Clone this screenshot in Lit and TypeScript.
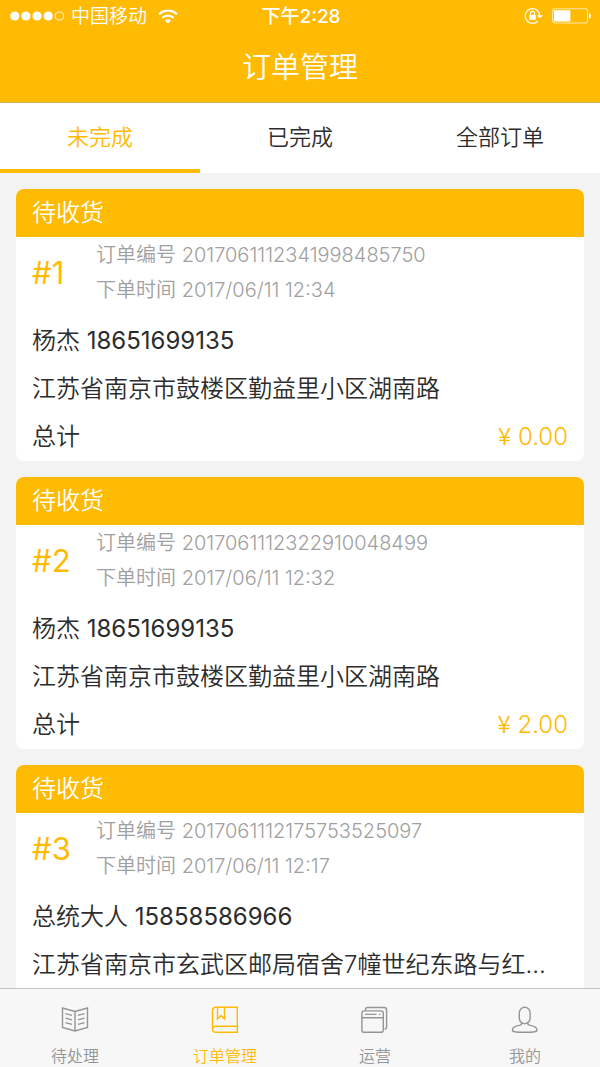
import { LitElement, html, css, svg } from "lit";
import { customElement, property, state } from "lit/decorators.js";
import { classMap } from "lit/directives/class-map.js";

interface Order {
  index: number;
  status: string;
  code: string;
  time: string;
  name: string;
  phone: string;
  address: string;
  total: string;
}

const ORDERS: Order[] = [
  {
    index: 1,
    status: "待收货",
    code: "2017061112341998485750",
    time: "2017/06/11 12:34",
    name: "杨杰",
    phone: "18651699135",
    address: "江苏省南京市鼓楼区勤益里小区湖南路",
    total: "0.00",
  },
  {
    index: 2,
    status: "待收货",
    code: "2017061112322910048499",
    time: "2017/06/11 12:32",
    name: "杨杰",
    phone: "18651699135",
    address: "江苏省南京市鼓楼区勤益里小区湖南路",
    total: "2.00",
  },
  {
    index: 3,
    status: "待收货",
    code: "2017061112175753525097",
    time: "2017/06/11 12:17",
    name: "总统大人",
    phone: "15858586966",
    address: "江苏省南京市玄武区邮局宿舍7幢世纪东路与红山路交叉口",
    total: "0.00",
  },
];

const TABS = ["未完成", "已完成", "全部订单"];

const ICONS = {
  book: svg`<path d="M1.5 2 L14 5.5 L26.5 2 V21.5 L14 25 L1.5 21.5 Z M14 5.5 V25" /><path d="M4.5 7.6 L11 9.4 M4.5 12.1 L11 13.9 M4.5 16.6 L11 18.4 M23.5 7.6 L17 9.4 M23.5 12.1 L17 13.9 M23.5 16.6 L17 18.4" />`,
  orders: svg`<path d="M26.3 20.3 V1.3 H5 C2.8 1.3 1.5 2.7 1.5 4.8 V23" /><path d="M26.3 20.3 H5 C0.4 20.3 0.4 26.3 5 26.3 H26.3 Z" /><path d="M6.5 1.3 V13 L10 9.6 L13.5 13 V1.3" />`,
  windows: svg`<rect x="0.9" y="4.9" width="21.4" height="21.4" rx="2.4" /><path d="M0.9 11.7 H22.3 M4 8.4 H15.5 M18 8.4 H19.6" /><path d="M4.4 4.6 V3.6 Q4.4 1.5 6.6 1.5 H23.2 Q25.6 1.5 25.6 3.9 V21 Q25.6 23 23.6 23.2" />`,
  person: svg`<rect x="8.3" y="1.3" width="10.8" height="16.4" rx="5.4" /><path d="M10.6 17 C10.8 18.4 10.4 18.8 9 19.1 C4.6 19.9 1.4 21.8 1.4 23.9 C1.4 25.8 4.6 26.3 13.7 26.3 C22.8 26.3 26 25.8 26 23.9 C26 21.8 22.8 19.9 18.4 19.1 C17 18.8 16.6 18.4 16.8 17" />`,
};

const NAV = [
  { label: "待处理", icon: ICONS.book },
  { label: "订单管理", icon: ICONS.orders },
  { label: "运营", icon: ICONS.windows },
  { label: "我的", icon: ICONS.person },
];

@customElement("status-bar")
export class StatusBar extends LitElement {
  static styles = css`
    :host {
      display: grid;
      grid-template-columns: 1fr auto 1fr;
      align-items: center;
      height: 32px;
      padding: 0 8px 0 10px;
      font-size: 19px;
      line-height: 32px;
    }
    .side {
      display: flex;
      align-items: center;
    }
    .label {
      padding-top: 2px;
      line-height: 30px;
    }
    .signal {
      width: 54px;
      height: 10px;
      margin-right: 7px;
    }
    .wifi {
      width: 20px;
      height: 15px;
      margin-left: 11px;
    }
    .time {
      font-weight: 500;
    }
    .end {
      justify-content: flex-end;
      gap: 8px;
    }
    .lock {
      width: 20px;
      height: 18px;
    }
    .battery {
      width: 40px;
      height: 16px;
    }
  `;

  render() {
    return html`
      <div class="side">
        <svg class="signal" viewBox="0 0 54 10" fill="#fff" aria-hidden="true">
          <circle cx="4.7" cy="5" r="4.6" /><circle cx="15.9" cy="5" r="4.6" />
          <circle cx="27.1" cy="5" r="4.6" /><circle cx="38.3" cy="5" r="4.6" />
          <circle cx="49.4" cy="5" r="4.1" fill="none" stroke="#fff" stroke-width="0.9" />
        </svg>
        <span class="label">中国移动</span>
        <svg class="wifi" viewBox="0 0 20 15" fill="none" stroke="#fff" stroke-width="2.2" aria-hidden="true">
          <path d="M1 5.4 C6 0.4 14 0.4 19 5.4" />
          <path d="M4.3 8.9 C7.5 5.8 12.5 5.8 15.7 8.9" />
          <path d="M10 14.6 L6.9 11.4 C8.6 9.8 11.4 9.8 13.1 11.4 Z" fill="#fff" stroke="none" />
        </svg>
      </div>
      <span class="label time">下午2:28</span>
      <div class="side end">
        <svg class="lock" viewBox="0 0 20 18" fill="none" stroke="#fff" stroke-width="1.2" aria-hidden="true">
          <path d="M15.8 9 A7.3 7.3 0 1 0 13.6 14.2" />
          <path d="M12.8 8.2 H19 L15.9 11.6 Z" fill="#fff" stroke="none" />
          <rect x="5.2" y="8" width="6.6" height="4.8" rx="0.6" fill="#fff" stroke="none" />
          <path d="M6.5 8.2 V6.4 A2 2 0 0 1 10.5 6.4 V8.2" />
        </svg>
        <svg class="battery" viewBox="0 0 40 16" aria-hidden="true">
          <rect x="0.6" y="0.8" width="35" height="14.2" rx="2.2" fill="none" stroke="#ffe7a6" stroke-width="1.1" />
          <rect x="2" y="2.2" width="16.4" height="11.4" rx="0.8" fill="#fff" />
          <path d="M37.2 5 C39.6 6 39.6 10 37.2 11 Z" fill="#fff" />
        </svg>
      </div>
    `;
  }
}

@customElement("order-card")
export class OrderCard extends LitElement {
  @property({ attribute: false }) order!: Order;

  static styles = css`
    :host {
      display: block;
      flex: none;
      overflow: hidden;
      border-radius: 8px;
      background: #fff;
      color: #2c2c2c;
      font-size: 24px;
      line-height: 48px;
    }
    .status {
      margin: 0;
      padding: 0 16px;
      background: #ffba04;
      color: #fff;
      font-size: 24px;
      font-weight: 350;
    }
    .body {
      padding: 0 16px;
    }
    .summary {
      display: flex;
      align-items: center;
      padding: 1px 0 9px;
    }
    .index {
      width: 64px;
      color: #ffba04;
      font-size: 31px;
      font-weight: 400;
    }
    .meta {
      color: #a0a0a0;
      font-size: 20px;
      line-height: 35px;
    }
    .digits {
      font-weight: 400;
    }
    .row {
      overflow: hidden;
      white-space: nowrap;
      text-overflow: ellipsis;
    }
    .total {
      display: flex;
      justify-content: space-between;
    }
    .price {
      color: #ffba04;
      font-weight: 350;
    }
    .yen {
      font-family: "Noto Sans CJK SC", sans-serif;
      line-height: 1;
    }
  `;

  render() {
    const o = this.order;
    return html`
      <article>
        <h2 class="status">${o.status}</h2>
        <div class="body">
          <div class="summary">
            <span class="index">#${o.index}</span>
            <div class="meta">
              <div>订单编号 ${o.code}</div>
              <div>下单时间 ${o.time}</div>
            </div>
          </div>
          <div class="row">${o.name} <span class="digits">${o.phone}</span></div>
          <div class="row">${o.address}</div>
          <div class="total">
            <span>总计</span>
            <span class="price"><span class="yen">¥</span> ${o.total}</span>
          </div>
        </div>
      </article>
    `;
  }
}

@customElement("app-root")
export class AppRoot extends LitElement {
  @state() private tab = 0;
  @state() private section = 1;

  static styles = css`
    :host {
      display: flex;
      flex-direction: column;
      height: 100vh;
      background: #f3f3f3;
      color: #2c2c2c;
      font-family: Inter, "Noto Sans CJK SC", sans-serif;
      font-weight: 350;
    }
    .header {
      flex: none;
      border-bottom: 1px solid #d0b060;
      background: #ffba04;
      color: #fff;
    }
    .title {
      margin: 0;
      padding-top: 2px;
      font-size: 29px;
      font-weight: 350;
      line-height: 68px;
      text-align: center;
    }
    .tabs {
      display: grid;
      grid-template-columns: repeat(3, 1fr);
      flex: none;
      height: 70px;
      background: #fff;
    }
    button {
      margin: 0;
      padding: 0;
      border: 0;
      background: none;
      color: inherit;
      font: inherit;
      cursor: pointer;
    }
    .tab {
      border-bottom: 4px solid transparent;
      padding-bottom: 3px;
      font-size: 22px;
    }
    .tab.active {
      border-bottom-color: #ffba04;
      color: #ffba04;
    }
    .list {
      display: flex;
      flex: 1;
      flex-direction: column;
      gap: 16px;
      min-height: 0;
      padding: 16px;
      overflow-y: auto;
      scrollbar-width: none;
    }
    .nav {
      display: grid;
      grid-template-columns: repeat(4, 1fr);
      flex: none;
      height: 78px;
      border-top: 1px solid #c4c4c4;
      background: #f7f7f7;
      color: #959595;
    }
    .item {
      display: flex;
      flex-direction: column;
      align-items: center;
      gap: 11px;
      padding-top: 17px;
      font-size: 16px;
      line-height: 22px;
    }
    .item.active {
      color: #ffba04;
    }
    .icon {
      width: 28px;
      height: 28px;
      overflow: visible;
      fill: none;
      stroke: currentColor;
      stroke-width: 1.4;
    }
  `;

  render() {
    return html`
      <header class="header">
        <status-bar></status-bar>
        <h1 class="title">订单管理</h1>
      </header>
      <div class="tabs" role="tablist">
        ${TABS.map(
          (label, i) => html`
            <button
              class=${classMap({ tab: true, active: this.tab === i })}
              role="tab"
              aria-selected=${this.tab === i ? "true" : "false"}
              @click=${() => (this.tab = i)}
            >${label}</button>
          `
        )}
      </div>
      <main class="list">
        ${ORDERS.map((order) => html`<order-card .order=${order}></order-card>`)}
      </main>
      <nav class="nav">
        ${NAV.map(
          (item, i) => html`
            <button
              class=${classMap({ item: true, active: this.section === i })}
              @click=${() => (this.section = i)}
            >
              <svg class="icon" viewBox="0 0 28 28" aria-hidden="true">${item.icon}</svg>
              <span>${item.label}</span>
            </button>
          `
        )}
      </nav>
    `;
  }
}
